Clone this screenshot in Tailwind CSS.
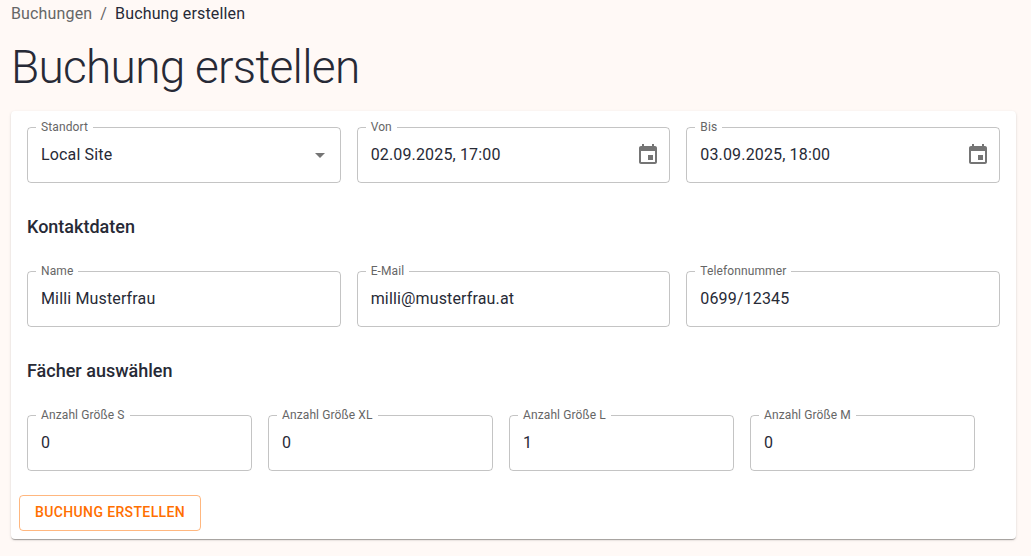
<!DOCTYPE html>
<html lang="de">
<head>
<meta charset="utf-8">
<title>Buchung erstellen</title>
<script src="https://cdn.jsdelivr.net/npm/@tailwindcss/browser@4"></script>
</head>
<body class="h-[556px] overflow-hidden bg-[#fff9f6] pl-[11px] pr-[15px] font-[Roboto,sans-serif] text-base tracking-[0.00938em] text-[#272a36]">
  <nav class="flex h-6 items-center pb-px pt-1 leading-6">
    <a class="text-[#666666]">Buchungen</a>
    <span class="mx-2 text-[#666666]">/</span>
    <span>Buchung erstellen</span>
  </nav>
  <h1 class="mt-[15px] h-14 text-[46px] font-light leading-[56px] tracking-[-0.01562em]">Buchung erstellen</h1>

  <main class="mt-4 h-[428px] rounded bg-white px-4 pt-4 shadow-[0px_2px_1px_-1px_rgba(0,0,0,0.2),0px_1px_1px_0px_rgba(0,0,0,0.14),0px_1px_3px_0px_rgba(0,0,0,0.12)]">
    <section class="grid grid-cols-3 gap-4">
      <fieldset class="-mt-[5px] h-[61px] min-w-0 rounded border border-black/23 px-2">
        <legend class="h-[11px] px-[5px] text-xs leading-[11px] tracking-[0.00938em] text-[#666666]">Standort</legend>
        <div class="flex h-[44px] items-center justify-between pl-[5px] pr-0">
          <span>Local Site</span>
          <svg class="size-6 fill-[#757575]" viewBox="0 0 24 24"><path d="M7 10l5 5 5-5z"/></svg>
        </div>
      </fieldset>
      <fieldset class="-mt-[5px] h-[61px] min-w-0 rounded border border-black/23 px-2">
        <legend class="h-[11px] px-[5px] text-xs leading-[11px] tracking-[0.00938em] text-[#666666]">Von</legend>
        <div class="flex h-[44px] items-center justify-between pl-[5px] pr-px">
          <span>02.09.2025, 17:00</span>
          <svg class="size-6 fill-[#757575]" viewBox="0 0 24 24"><path d="M17 12h-5v5h5v-5zM16 1v2H8V1H6v2H5c-1.11 0-1.99.9-1.99 2L3 19c0 1.1.89 2 2 2h14c1.1 0 2-.9 2-2V5c0-1.1-.9-2-2-2h-1V1h-2zm3 18H5V8h14v11z"/></svg>
        </div>
      </fieldset>
      <fieldset class="-mt-[5px] h-[61px] min-w-0 rounded border border-black/23 px-2">
        <legend class="h-[11px] px-[5px] text-xs leading-[11px] tracking-[0.00938em] text-[#666666]">Bis</legend>
        <div class="flex h-[44px] items-center justify-between pl-[5px] pr-px">
          <span>03.09.2025, 18:00</span>
          <svg class="size-6 fill-[#757575]" viewBox="0 0 24 24"><path d="M17 12h-5v5h5v-5zM16 1v2H8V1H6v2H5c-1.11 0-1.99.9-1.99 2L3 19c0 1.1.89 2 2 2h14c1.1 0 2-.9 2-2V5c0-1.1-.9-2-2-2h-1V1h-2zm3 18H5V8h14v11z"/></svg>
        </div>
      </fieldset>
    </section>

    <h2 class="mt-8 h-6 text-[18px] font-medium leading-6 tracking-normal">Kontaktdaten</h2>
    <section class="mt-8 grid grid-cols-3 gap-4">
      <fieldset class="-mt-[5px] h-[61px] min-w-0 rounded border border-black/23 px-2">
        <legend class="h-[11px] px-[5px] text-xs leading-[11px] tracking-[0.00938em] text-[#666666]">Name</legend>
        <div class="flex h-[44px] items-center pl-[5px]">Milli Musterfrau</div>
      </fieldset>
      <fieldset class="-mt-[5px] h-[61px] min-w-0 rounded border border-black/23 px-2">
        <legend class="h-[11px] px-[5px] text-xs leading-[11px] tracking-[0.00938em] text-[#666666]">E-Mail</legend>
        <div class="flex h-[44px] items-center pl-[5px]">milli@musterfrau.at</div>
      </fieldset>
      <fieldset class="-mt-[5px] h-[61px] min-w-0 rounded border border-black/23 px-2">
        <legend class="h-[11px] px-[5px] text-xs leading-[11px] tracking-[0.00938em] text-[#666666]">Telefonnummer</legend>
        <div class="flex h-[44px] items-center pl-[5px]">0699/12345</div>
      </fieldset>
    </section>

    <h2 class="mt-8 h-6 text-[18px] font-medium leading-6 tracking-normal">Fächer auswählen</h2>
    <section class="mt-8 flex gap-4">
      <fieldset class="-mt-[5px] h-[61px] w-[225px] rounded border border-black/23 px-2">
        <legend class="h-[11px] px-[5px] text-xs leading-[11px] tracking-[0.00938em] text-[#666666]">Anzahl Größe S</legend>
        <div class="flex h-[44px] items-center pl-[5px]">0</div>
      </fieldset>
      <fieldset class="-mt-[5px] h-[61px] w-[225px] rounded border border-black/23 px-2">
        <legend class="h-[11px] px-[5px] text-xs leading-[11px] tracking-[0.00938em] text-[#666666]">Anzahl Größe XL</legend>
        <div class="flex h-[44px] items-center pl-[5px]">0</div>
      </fieldset>
      <fieldset class="-mt-[5px] h-[61px] w-[225px] rounded border border-black/23 px-2">
        <legend class="h-[11px] px-[5px] text-xs leading-[11px] tracking-[0.00938em] text-[#666666]">Anzahl Größe L</legend>
        <div class="flex h-[44px] items-center pl-[5px]">1</div>
      </fieldset>
      <fieldset class="-mt-[5px] h-[61px] w-[225px] rounded border border-black/23 px-2">
        <legend class="h-[11px] px-[5px] text-xs leading-[11px] tracking-[0.00938em] text-[#666666]">Anzahl Größe M</legend>
        <div class="flex h-[44px] items-center pl-[5px]">0</div>
      </fieldset>
    </section>

    <button class="-ml-2 mt-6 flex h-9 w-[182px] items-center whitespace-nowrap rounded border border-[#ff6f00]/50 px-[15px] pb-0.5 text-sm font-medium uppercase leading-6 tracking-[0.37px] text-[#ff6f00]">Buchung erstellen</button>
  </main>
</body>
</html>
